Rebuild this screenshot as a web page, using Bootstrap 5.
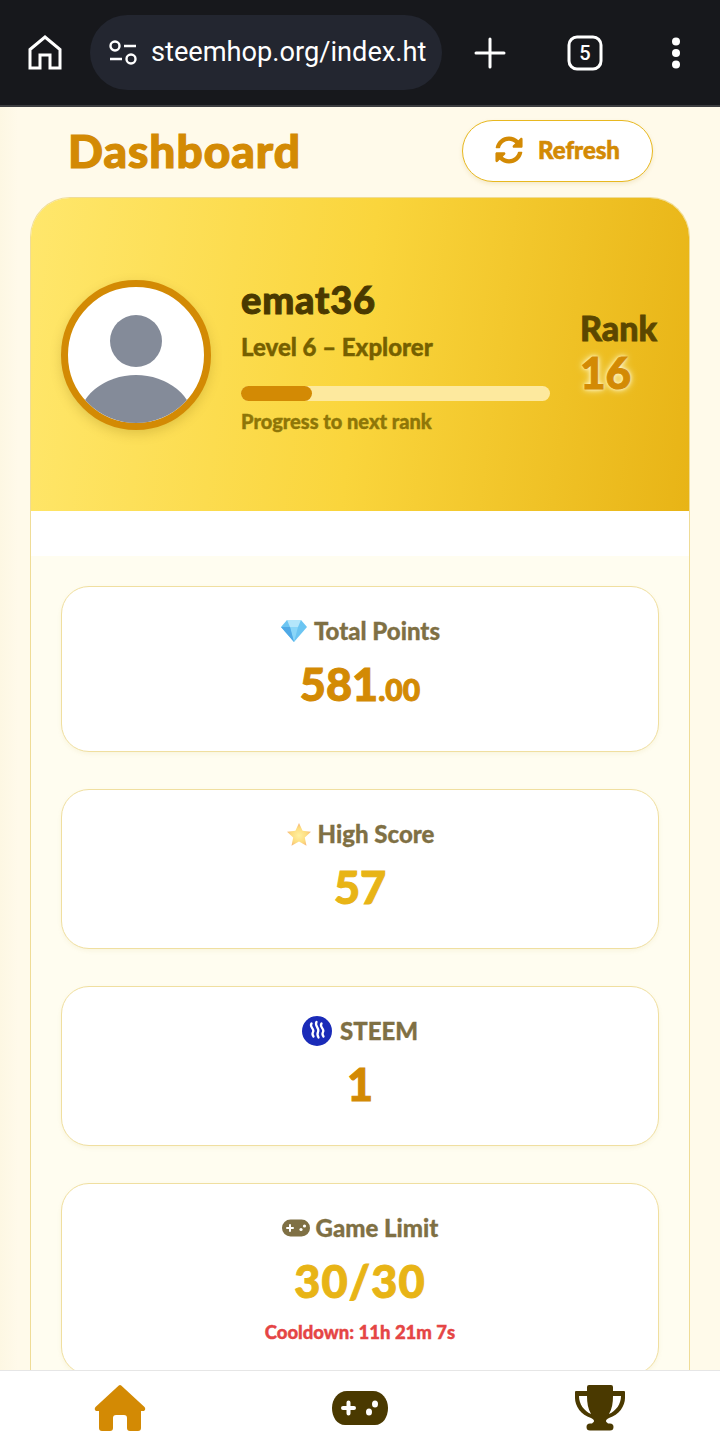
<!DOCTYPE html>
<html lang="en">
<head>
    <meta charset="UTF-8">
    <meta name="viewport" content="width=device-width, initial-scale=1.0">
    <title>SteemHop - Dashboard</title>
    <link href="https://cdn.jsdelivr.net/npm/bootstrap@5.3.2/dist/css/bootstrap.min.css" rel="stylesheet">
    <style>
        html, body { height: 100%; }
        body {
            background: #fffaea;
            font-family: "Lato", "Liberation Sans", sans-serif;
            font-weight: 900;
            overflow: hidden;
        }
        .app-shell { height: 1446px; }

        .browser-bar {
            height: 107px;
            background: #17181c;
            border-bottom: 2px solid #3c3d40;
            color: #fff;
        }
        .browser-home { width: 90px; }
        .url-pill {
            width: 352px;
            height: 75px;
            background: #232630;
            border-radius: 38px;
            padding-left: 18px;
            font-family: "Roboto", sans-serif;
            font-weight: 400;
            font-size: 27.2px;
            gap: 13px;
            overflow: hidden;
            white-space: nowrap;
        }
        .browser-actions { width: 278px; padding: 0 38px 0 32px; }
        .tab-count { margin-right: 6px; }

        .page-scroll { min-height: 0; overflow: hidden; background: linear-gradient(90deg, #fdf7e3 0, #fffaea 18px); }
        .page-head { height: 90px; padding: 13px 67px 0 68px; }
        .page-title {
            font-size: 46px;
            line-height: 1;
            letter-spacing: 1px;
            color: #d38a04;
            font-weight: 900;
            margin: 0;
            -webkit-text-stroke: 1.2px #d38a04;
        }
        .refresh-btn {
            width: 191px;
            height: 62px;
            background: #fff;
            border: 1px solid #e8b820;
            border-radius: 31px;
            color: #d38a04;
            font-size: 24px;
            font-weight: 900;
            gap: 15px;
            padding-bottom: 2px !important;
            box-shadow: 0 2px 4px rgba(180, 140, 20, .15);
            -webkit-text-stroke: .6px #d38a04;
        }
        .refresh-btn:hover { background: #fff; color: #d38a04; border-color: #e8b820; }

        .dash-panel {
            margin: 0 30px;
            background: #fffdf0;
            border: 1px solid #efdc97;
            border-bottom: 0;
            border-radius: 40px 40px 0 0;
            overflow: hidden;
        }
        .profile-head {
            height: 313px;
            background: linear-gradient(97deg, #ffe76c 0%, #fad53c 50%, #e8b416 100%);
            padding: 0 30px;
        }
        .avatar-ring {
            width: 150px;
            height: 150px;
            border: 7px solid #d38a04;
            border-radius: 50%;
            background: #fff;
            overflow: hidden;
            box-shadow: 0 4px 12px rgba(120, 90, 0, .22);
            flex-shrink: 0;
        }
        .avatar-ring svg { display: block; }
        .profile-main { width: 309px; margin-left: 30px; margin-top: 0; }
        .profile-name { font-size: 38px; line-height: 44px; letter-spacing: .8px; color: #4a3900; margin-bottom: 11px; -webkit-text-stroke: 1px #4a3900; }
        .profile-level { font-size: 24px; line-height: 30px; color: #766000; margin-bottom: 24px; -webkit-text-stroke: .4px #766000; }
        .xp-track { height: 15px; background: #fde99e; border-radius: 8px; }
        .xp-fill { height: 100%; background: #d38a04; border-radius: 8px; }
        .xp-note { font-size: 20px; line-height: 24px; color: #8e7608; margin-top: 8px; -webkit-text-stroke: .4px #8e7608; }
        .rank-box { margin-left: 30px; margin-top: -6px; }
        .rank-label { font-size: 34px; line-height: 40px; color: #5c4700; -webkit-text-stroke: .8px #5c4700; }
        .rank-value { font-size: 44px; line-height: 48px; color: #d38a04; text-shadow: 0 0 9px #fff6c4, 0 0 5px #fff6c4, 0 0 3px #fff6c4; -webkit-text-stroke: 1px #d38a04; }

        .white-gap { height: 45px; background: #fff; }
        .stat-stack { padding: 30px 30px 0; gap: 37px; }
        .stat-box {
            background: #fff;
            border: 1px solid #f0dfa0;
            border-radius: 28px;
            text-align: center;
            box-shadow: 0 2px 4px rgba(180, 150, 40, .08);
        }
        .stat-points { height: 166px; padding-top: 29px; }
        .stat-plain { height: 160px; padding-top: 29px; }
        .stat-limit { height: 192px; padding-top: 29px; }
        .stat-label { font-size: 24px; line-height: 30px; color: #7f7044; gap: 6px; -webkit-text-stroke: .3px #7f7044; }
        .stat-figure { font-size: 45px; line-height: 54px; margin-top: 11px; -webkit-text-stroke: 1px currentColor; }
        .stat-figure small { font-size: 30px; font-weight: 900; }
        .figure-wide { letter-spacing: 1.200px; }
        .tone-deep { color: #d38a04; }
        .tone-gold { color: #e8b416; }
        .steem-mark { margin-right: 2px; }
        .cooldown-line { font-size: 18.5px; line-height: 24px; color: #e54545; margin-top: 12px; -webkit-text-stroke: .4px #e54545; }

        .tab-bar { height: 76px; background: #fff; border-top: 1px solid #e6e6e6; padding-bottom: 1px; }
        .tab-slot { width: 240px; }
    </style>
</head>
<body>
    <div class="app-shell d-flex flex-column">

        <div class="browser-bar d-flex align-items-center flex-shrink-0">
            <div class="browser-home d-flex justify-content-center">
                <svg width="34" height="36" viewBox="0 0 34 36" fill="none" stroke="#fff" stroke-width="3" stroke-linejoin="miter">
                    <path d="M2 14.500 17 2l15 12.500V33H22V20h-10v13H2z"/>
                </svg>
            </div>
            <div class="url-pill d-flex align-items-center">
                <svg class="flex-shrink-0" width="30" height="30" viewBox="0 0 30 30" fill="none" stroke="#fff" stroke-width="2.400">
                    <circle cx="7" cy="8" r="4.500"/><path d="M16 8h12"/>
                    <circle cx="23" cy="21" r="4.500"/><path d="M2 21h12"/>
                </svg>
                <span>steemhop.org/index.ht</span>
            </div>
            <div class="browser-actions d-flex align-items-center justify-content-between">
                <svg width="32" height="32" viewBox="0 0 32 32" stroke="#fff" stroke-width="3" stroke-linecap="round">
                    <path d="M16 2v28M2 16h28"/>
                </svg>
                <svg class="tab-count" width="36" height="36" viewBox="0 0 36 36">
                    <rect x="2" y="2" width="32" height="32" rx="8" fill="none" stroke="#fff" stroke-width="3"/>
                    <text x="18" y="25" text-anchor="middle" fill="#fff" font-family="Roboto, sans-serif" font-size="20" font-weight="500">5</text>
                </svg>
                <svg width="12" height="32" viewBox="0 0 12 32" fill="#fff">
                    <circle cx="6" cy="4.500" r="4"/><circle cx="6" cy="16" r="4"/><circle cx="6" cy="27.500" r="4"/>
                </svg>
            </div>
        </div>

        <div class="page-scroll flex-grow-1">
            <div class="page-head d-flex justify-content-between align-items-start">
                <h1 class="page-title mt-2">Dashboard</h1>
                <button class="btn refresh-btn d-flex align-items-center justify-content-center p-0" type="button">
                    <svg width="28" height="28" viewBox="0 0 512 512" fill="#d38a04">
                        <path d="M370.7 133.3C339.5 104 298 88 255.8 88c-77.5.1-144.3 53.2-162.8 126.9-1.3 5.4-6.1 9.2-11.7 9.2H24.1c-7.5 0-13.2-6.8-11.8-14.2C33.9 94.9 134.8 8 256 8c66.4 0 126.8 26.1 171.3 68.7L463 41c15.1-15.1 41-4.4 41 17v134c0 13.3-10.7 24-24 24H346c-21.4 0-32.1-25.9-17-41l41.7-41.7zM32 296h134c21.4 0 32.1 25.9 17 41l-41.7 41.7c31.2 29.3 72.7 45.3 114.9 45.3 77.4-.1 144.3-53.1 162.8-126.8 1.3-5.4 6.1-9.2 11.7-9.2h57.3c7.5 0 13.2 6.8 11.8 14.2C478.1 417.1 377.2 504 256 504c-66.4 0-126.8-26.1-171.3-68.7L49 471c-15.1 15.1-41 4.4-41-17V320c0-13.3 10.7-24 24-24z"/>
                    </svg>
                    <span>Refresh</span>
                </button>
            </div>

            <div class="dash-panel">
                <div class="profile-head d-flex align-items-center">
                    <div class="avatar-ring">
                        <svg width="136" height="136" viewBox="0 0 136 136">
                            <circle cx="68" cy="54" r="26" fill="#848b99"/>
                            <ellipse cx="68" cy="136" rx="58" ry="48" fill="#848b99"/>
                        </svg>
                    </div>
                    <div class="profile-main">
                        <div class="profile-name">emat36</div>
                        <div class="profile-level">Level 6 – Explorer</div>
                        <div class="xp-track"><div class="xp-fill" style="width: 23%"></div></div>
                        <div class="xp-note">Progress to next rank</div>
                    </div>
                    <div class="rank-box">
                        <div class="rank-label">Rank</div>
                        <div class="rank-value">16</div>
                    </div>
                </div>
                <div class="white-gap"></div>

                <div class="stat-stack d-flex flex-column">
                    <div class="stat-box stat-points">
                        <div class="stat-label d-flex justify-content-center align-items-center">
                            <svg width="28" height="24" viewBox="0 0 28 24">
                                <path d="M7 1h14l6 7-13 15L1 8z" fill="#6cc5f2"/>
                                <path d="M7 1h14l-3 7H10z" fill="#b4e6fb"/>
                                <path d="M10 8h8l-4 15z" fill="#8ad6f8"/>
                                <path d="M1 8h9l4 15z" fill="#4fa9e6"/>
                            </svg>
                            <span>Total Points</span>
                        </div>
                        <div class="stat-figure tone-deep">581<small>.00</small></div>
                    </div>
                    <div class="stat-box stat-plain">
                        <div class="stat-label d-flex justify-content-center align-items-center">
                            <svg width="26" height="25" viewBox="0 0 26 25">
                                <defs><radialGradient id="starFill" cx=".5" cy=".55" r=".55"><stop offset="0" stop-color="#fff0a0"/><stop offset=".6" stop-color="#fddc7e"/><stop offset="1" stop-color="#f5b27a"/></radialGradient></defs>
                                <path d="M13 1l3.600 7.700 8.400 1-6.200 5.700 1.700 8.300L13 19.600 5.500 23.700l1.700-8.300L1 9.700l8.400-1z" fill="url(#starFill)"/>
                            </svg>
                            <span>High Score</span>
                        </div>
                        <div class="stat-figure tone-gold">57</div>
                    </div>
                    <div class="stat-box stat-plain">
                        <div class="stat-label d-flex justify-content-center align-items-center">
                            <svg class="steem-mark" width="30" height="30" viewBox="0 0 30 30">
                                <circle cx="15" cy="15" r="15" fill="#1a2bb8"/>
                                <g fill="none" stroke="#fff" stroke-width="2.300" stroke-linecap="round">
                                    <path d="M9.500 7.500c-2.500 3.500 3.500 5.500 1.500 8.500-.8 1.300-.6 3 .5 4.500"/>
                                    <path d="M14.500 6c-2.500 3.500 3.500 6.500 1.500 10-.8 1.500-.6 3.500.5 5.500"/>
                                    <path d="M19.500 7.500c-2.500 3.500 3.500 5.500 1.500 8.500-.8 1.300-.6 3 .5 4.500"/>
                                </g>
                            </svg>
                            <span>STEEM</span>
                        </div>
                        <div class="stat-figure tone-deep">1</div>
                    </div>
                    <div class="stat-box stat-limit">
                        <div class="stat-label d-flex justify-content-center align-items-center">
                            <svg width="28" height="18" viewBox="0 0 28 18">
                                <rect width="28" height="17" y=".5" rx="8.500" fill="#7f7044"/>
                                <path d="M5 9h6M8 6v6" stroke="#fff" stroke-width="2" stroke-linecap="round"/>
                                <circle cx="19" cy="10.500" r="1.600" fill="#fff"/><circle cx="22.500" cy="7" r="1.600" fill="#fff"/>
                            </svg>
                            <span>Game Limit</span>
                        </div>
                        <div class="stat-figure tone-gold figure-wide">30/30</div>
                        <div class="cooldown-line">Cooldown: 11h 21m 7s</div>
                    </div>
                </div>
            </div>
        </div>

        <div class="tab-bar d-flex align-items-center flex-shrink-0">
            <div class="tab-slot d-flex justify-content-center">
                <svg width="52" height="46" viewBox="0 0 52 46">
                    <path d="M26 0a1.500 1.500 0 0 1 1.200.6L50.500 22c1.500 1.800.5 4-1.500 4h-2v17a3 3 0 0 1-3 3h-8a3 3 0 0 1-3-3V33a3 3 0 0 0-3-3h-8a3 3 0 0 0-3 3v10a3 3 0 0 1-3 3H8a3 3 0 0 1-3-3V26H3c-2 0-3-2.200-1.500-4L24.800.6A1.500 1.500 0 0 1 26 0z" fill="#d38a04"/>
                </svg>
            </div>
            <div class="tab-slot d-flex justify-content-center">
                <svg width="56" height="34" viewBox="0 0 56 34">
                    <path d="M15 0h26c9 0 15 8 15 17s-5 17-13 17H13C5 34 0 26 0 17S6 0 15 0z" fill="#4a3900"/>
                    <path d="M11 17h11M16.500 11.500v11" stroke="#fff" stroke-width="4" stroke-linecap="round"/>
                    <ellipse cx="43" cy="13" rx="3" ry="3.600" fill="#fff"/><ellipse cx="37" cy="21" rx="3" ry="3.600" fill="#fff"/>
                </svg>
            </div>
            <div class="tab-slot d-flex justify-content-center">
                <svg width="50" height="46" viewBox="0 0 50 46" fill="#4a3900">
                    <path d="M12 2a2 2 0 0 1 2-2h22a2 2 0 0 1 2 2v4h11a1 1 0 0 1 1 1v6c0 8-6 17-16 20-2 1-3 2-3 3s1 1.500 2 2.500h2a3 3 0 0 1 0 7H15a3 3 0 0 1 0-7h2c1-1 2-1.500 2-2.500s-1-2-3-3C6 30 0 21 0 13V7a1 1 0 0 1 1-1h11z"/>
                    <path d="M4 11h8c0 7 1 13 4 18C9 26 4 19 4 11zM46 11h-8c0 7-1 13-4 18 7-3 12-10 12-18z" fill="#fff"/>
                </svg>
            </div>
        </div>
    </div>
    <script src="https://cdn.jsdelivr.net/npm/bootstrap@5.3.2/dist/js/bootstrap.bundle.min.js"></script>
</body>
</html>
